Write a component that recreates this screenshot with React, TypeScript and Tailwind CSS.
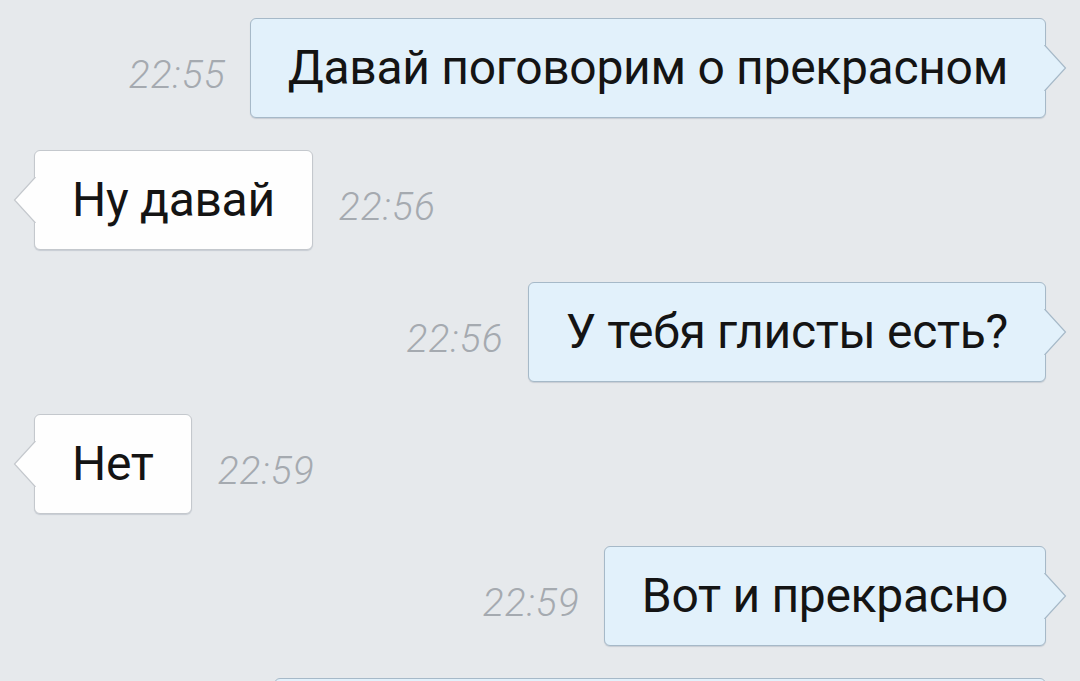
type Msg = { text: string; time: string; out: boolean };

const messages: Msg[] = [
  { text: 'Давай поговорим о прекрасном', time: '22:55', out: true },
  { text: 'Ну давай', time: '22:56', out: false },
  { text: 'У тебя глисты есть?', time: '22:56', out: true },
  { text: 'Нет', time: '22:59', out: false },
  { text: 'Вот и прекрасно', time: '22:59', out: true },
];

function Tail({ out }: { out: boolean }) {
  const fill = out ? '#e2f1fb' : '#fefefe';
  const stroke = out ? '#a6b9c8' : '#c4c8cd';
  return (
    <svg
      width="23"
      height="46"
      viewBox="0 0 23 46"
      className={
        out
          ? 'absolute top-1/2 -translate-y-1/2 left-[calc(100%-1px)]'
          : 'absolute top-1/2 -translate-y-1/2 right-[calc(100%-1px)] -scale-x-100'
      }
    >
      <path d="M0.5 0 L21.5 23 L0.5 46 Z" fill={fill} stroke="none" />
      <path d="M0.5 0 L21.5 23 L0.5 46" fill="none" stroke={stroke} strokeWidth="1.2" />
    </svg>
  );
}

function Bubble({ text, out, className = '' }: { text: string; out: boolean; className?: string }) {
  return (
    <div
      className={
        'relative h-[100px] flex items-center px-[37px] rounded-[6px] border shadow-[0_1px_1px_rgba(60,80,100,0.18)] ' +
        (out ? 'bg-[#e2f1fb] border-[#a6b9c8] ' : 'bg-[#fefefe] border-[#c4c8cd] ') +
        className
      }
    >
      <span className="text-[48px] text-[#141414] tracking-[-0.3px] whitespace-nowrap">{text}</span>
      <Tail out={out} />
    </div>
  );
}

function Time({ t }: { t: string }) {
  return (
    <span className="mt-[14px] text-[39px] italic font-light text-[#a5aab0] tracking-[1px]">{t}</span>
  );
}

export default function App() {
  return (
    <div
      className="h-[681px] w-[1080px] overflow-hidden bg-[#e6e9ec] px-[34px] pt-[18px] flex flex-col gap-[32px]"
      style={{ fontFamily: 'Roboto, "Noto Sans", sans-serif' }}
    >
      {messages.map((m, i) =>
        m.out ? (
          <div key={i} className="flex items-center justify-end gap-[24px]">
            <Time t={m.time} />
            <Bubble text={m.text} out />
          </div>
        ) : (
          <div key={i} className="flex items-center gap-[26px]">
            <Bubble text={m.text} out={false} />
            <Time t={m.time} />
          </div>
        )
      )}
      <div className="flex justify-end shrink-0">
        <Bubble text="" out className="w-[772px]" />
      </div>
    </div>
  );
}
